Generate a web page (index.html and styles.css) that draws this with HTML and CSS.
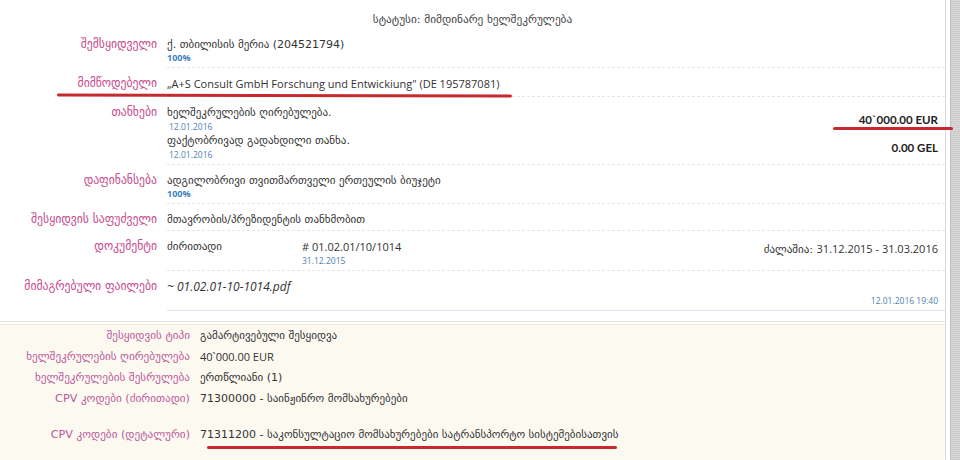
FILE: index.html
```html
<!DOCTYPE html>
<html lang="ka">
<head>
  <meta charset="UTF-8">
  <meta name="viewport" content="width=device-width, initial-scale=1.0">
  <title>ხელშეკრულება</title>
  <link rel="stylesheet" href="styles.css">
</head>
<body>
  <div class="page">
    <div class="main">
      <div class="panel">
        <div class="status">სტატუსი: მიმდინარე ხელშეკრულება</div>

        <div class="row">
          <div class="label">შემსყიდველი</div>
          <div class="value">
            <div class="text">ქ. თბილისის მერია (204521794)</div>
            <div class="percent">100%</div>
          </div>
        </div>

        <div class="row">
          <div class="label">მიმწოდებელი</div>
          <div class="value">
            <div class="text latin">„A+S Consult GmbH Forschung und Entwickiung" (DE 195787081)</div>
          </div>
        </div>

        <div class="row">
          <div class="label">თანხები</div>
          <div class="value">
            <div class="line">
              <div>
                <div class="text">ხელშეკრულების ღირებულება.</div>
                <div class="date">12.01.2016</div>
              </div>
              <div class="amount">40`000.00 EUR</div>
            </div>
            <div class="line">
              <div>
                <div class="text">ფაქტობრივად გადახდილი თანხა.</div>
                <div class="date">12.01.2016</div>
              </div>
              <div class="amount">0.00 GEL</div>
            </div>
          </div>
        </div>

        <div class="row">
          <div class="label">დაფინანსება</div>
          <div class="value">
            <div class="text">ადგილობრივი თვითმართველი ერთეულის ბიუჯეტი</div>
            <div class="percent">100%</div>
          </div>
        </div>

        <div class="row">
          <div class="label">შესყიდვის საფუძველი</div>
          <div class="value">
            <div class="text">მთავრობის/პრეზიდენტის თანხმობით</div>
          </div>
        </div>

        <div class="row">
          <div class="label">დოკუმენტი</div>
          <div class="value doc">
            <div class="doc-type text">ძირითადი</div>
            <div class="doc-num">
              <div class="text latin"># 01.02.01/10/1014</div>
              <div class="date">31.12.2015</div>
            </div>
            <div class="doc-valid text">ძალაშია: <span class="latin">31.12.2015 - 31.03.2016</span></div>
          </div>
        </div>

        <div class="row last">
          <div class="label">მიმაგრებული ფაილები</div>
          <div class="value files">
            <div class="text file">~ 01.02.01-10-1014.pdf</div>
            <div class="date">12.01.2016 19:40</div>
          </div>
        </div>
      </div>

      <div class="details">
        <div class="drow">
          <div class="dlabel">შესყიდვის ტიპი</div>
          <div class="dvalue">გამარტივებული შესყიდვა</div>
        </div>
        <div class="drow">
          <div class="dlabel">ხელშეკრულების ღირებულება</div>
          <div class="dvalue latin">40`000.00 EUR</div>
        </div>
        <div class="drow">
          <div class="dlabel">ხელშეკრულების შესრულება</div>
          <div class="dvalue">ერთწლიანი (1)</div>
        </div>
        <div class="drow">
          <div class="dlabel">CPV კოდები (ძირითადი)</div>
          <div class="dvalue">71300000 - საინჟინრო მომსახურებები</div>
        </div>
        <div class="drow spaced">
          <div class="dlabel">CPV კოდები (დეტალური)</div>
          <div class="dvalue">71311200 - საკონსულტაციო მომსახურებები სატრანსპორტო სისტემებისათვის</div>
        </div>
      </div>
    </div>
    <div class="scrollbar"></div>
  </div>

  <!-- hand drawn marks on the screenshot -->
  <div class="mark mark-supplier"></div>
  <div class="mark mark-amount"></div>
  <div class="mark mark-cpv"></div>
</body>
</html>
```

FILE: styles.css
```css
body {
  margin: 0;
  background-color: #fff;
  font-family: "DejaVu Sans", sans-serif;
  font-size: 11px;
  color: #333;
  height: 460px;
  overflow: hidden;
}
.page {
  display: flex;
  height: 460px;
}
.main {
  width: 945px;
  border-right: 1px solid #dcdcdc;
  display: flex;
  flex-direction: column;
}
.scrollbar {
  margin-left: 4px;
  flex: 1;
  background: repeating-linear-gradient(0deg, #c9c9c9 0, #c9c9c9 1px, #dadada 1px, #dadada 2px);
  border-left: 1px solid #bdbdbd;
}
.panel {
  padding-bottom: 10px;
  border-bottom: 1px solid #e2e2e2;
}
.status {
  text-align: center;
  padding: 12px 0 1px;
  color: #444;
  font-size: 11.3px;
  line-height: 16px;
}
.latin {
  font-family: "Open Sans", "DejaVu Sans", sans-serif;
  font-size: 11px;
}
.row {
  display: flex;
}
.label {
  width: 157px;
  flex-shrink: 0;
  text-align: right;
  padding: 8px 10px 0 0;
  color: #c74a8e;
  font-size: 11.7px;
  line-height: 15px;
}
.value {
  flex: 1;
  padding: 8px 7px 3px 0;
  border-bottom: 1px dashed #e8e8e8;
}
.row:nth-child(3) .value {
  padding-bottom: 5px;
}
.row.last .value {
  border-bottom: 1px solid #dfe5ee;
}
.text {
  line-height: 15px;
  height: 15px;
}
.percent {
  font-family: "Open Sans", "DejaVu Sans", sans-serif;
  font-size: 9px;
  font-weight: bold;
  color: #3b7fc0;
  line-height: 12px;
}
.date {
  font-family: "Open Sans", "DejaVu Sans", sans-serif;
  font-size: 8.5px;
  color: #4f7fb0;
  line-height: 13px;
  padding-left: 2px;
}
.line {
  display: flex;
  justify-content: space-between;
  align-items: center;
}
.amount {
  font-family: "Lato", "Open Sans", sans-serif;
  font-size: 11.5px;
  font-weight: bold;
  color: #222;
}
.doc {
  display: flex;
  align-items: flex-start;
}
.doc-type {
  width: 135px;
}
.doc-num .date {
  padding-left: 0;
}
.doc-valid {
  margin-left: auto;
  padding-top: 2px;
}
.files {
  display: flex;
  justify-content: space-between;
  align-items: flex-end;
  min-height: 28px;
}
.file {
  font-family: "Open Sans", "DejaVu Sans", sans-serif;
  font-style: italic;
  font-size: 12px;
  align-self: flex-start;
}
.details {
  flex: 1;
  margin-top: 2px;
  background-color: #fcf9f1;
  border-top: 1px solid #f1e9d4;
}
.drow {
  display: flex;
  line-height: 21px;
  height: 21px;
}
.drow.spaced {
  margin-top: 15px;
}
.dlabel {
  width: 190px;
  flex-shrink: 0;
  text-align: right;
  padding-right: 10px;
  color: #bb5a9c;
  font-size: 11.2px;
}
.dvalue {
  color: #333;
}
.mark {
  position: absolute;
  height: 3px;
  background-color: #c52a31;
  border-radius: 2px;
}
.mark-supplier {
  left: 57px;
  top: 94px;
  width: 455px;
  transform: rotate(0.15deg);
}
.mark-amount {
  left: 833px;
  top: 127px;
  width: 120px;
}
.mark-cpv {
  left: 207px;
  top: 446px;
  width: 410px;
}
```
